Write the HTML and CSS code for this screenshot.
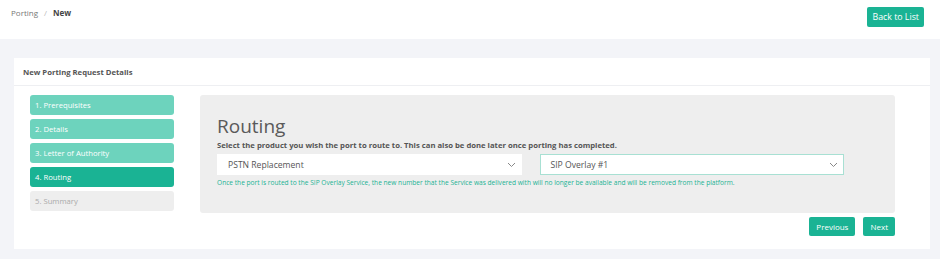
FILE: index.html
```html
<!DOCTYPE html>
<html lang="en">
  <head>
    <meta charset="UTF-8" />
    <title>Porting - New</title>
    <link rel="stylesheet" href="styles.css">
  </head>
  <body>
    <div class="topbar">
      <div class="breadcrumb">
        <span class="crumb">Porting</span>
        <span class="sep">/</span>
        <span class="crumb current">New</span>
      </div>
      <button class="btn">Back to List</button>
    </div>

    <div class="page">
      <div class="card">
        <div class="card-header">New Porting Request Details</div>
        <div class="card-body">
          <div class="wizard">
            <ul class="steps">
              <li class="step done">1. Prerequisites</li>
              <li class="step done">2. Details</li>
              <li class="step done">3. Letter of Authority</li>
              <li class="step active">4. Routing</li>
              <li class="step disabled">5. Summary</li>
            </ul>
            <div class="panel">
              <h2>Routing</h2>
              <p class="lead">Select the product you wish the port to route to. This can also be done later once porting has completed.</p>
              <div class="selects">
                <div class="select">
                  <span>PSTN Replacement</span>
                  <svg width="9" height="6" viewBox="0 0 9 6"><path d="M1 1l3.5 3.5L8 1" fill="none" stroke="#888" stroke-width="1"/></svg>
                </div>
                <div class="select focused">
                  <span>SIP Overlay #1</span>
                  <svg width="9" height="6" viewBox="0 0 9 6"><path d="M1 1l3.5 3.5L8 1" fill="none" stroke="#888" stroke-width="1"/></svg>
                </div>
              </div>
              <p class="help">Once the port is routed to the SIP Overlay Service, the new number that the Service was delivered with will no longer be available and will be removed from the platform.</p>
            </div>
          </div>
          <div class="actions">
            <button class="btn">Previous</button>
            <button class="btn">Next</button>
          </div>
        </div>
      </div>
    </div>
  </body>
</html>
```

FILE: styles.css
```css
body {
  margin: 0;
  font-family: "Open Sans", "Liberation Sans", sans-serif;
  background-color: #f3f4f8;
  color: #676a6c;
}

.topbar {
  display: flex;
  justify-content: space-between;
  align-items: flex-start;
  background: white;
  height: 39px;
  padding: 7px 16px 0 11px;
  box-sizing: border-box;
}

.breadcrumb {
  font-size: 8px;
  padding-top: 0;
}

.crumb {
  color: #777;
}

.crumb.current {
  color: #444;
  font-weight: bold;
}

.sep {
  color: #bbb;
  margin: 0 4px;
}

.btn {
  background-color: #1ab394;
  color: white;
  border: none;
  border-radius: 2px;
  font-family: inherit;
  font-size: 8px;
  height: 19px;
  padding: 0 6px;
  cursor: pointer;
}

.topbar .btn {
  height: 20px;
  padding: 0 5px;
  font-size: 8.8px;
}

.page {
  padding: 19px 10px 10px 14px;
}

.card {
  background: white;
  width: 916px;
  height: 191px;
}

.card-header {
  font-size: 7.7px;
  font-weight: bold;
  color: #555;
  height: 27px;
  line-height: 28px;
  padding-left: 9px;
  border-bottom: 1px solid #eeeff2;
}

.card-body {
  padding: 9px 35px 0 16px;
}

.wizard {
  display: flex;
  gap: 26px;
}

.steps {
  list-style: none;
  margin: 0;
  padding: 0;
  width: 144px;
  display: flex;
  flex-direction: column;
  gap: 4px;
}

.step {
  height: 20px;
  line-height: 20px;
  border-radius: 3px;
  padding-left: 5px;
  font-size: 7.7px;
  color: white;
}

.step.done {
  background-color: #6dd3bd;
}

.step.active {
  background-color: #1ab394;
}

.step.disabled {
  background-color: #eeeeee;
  color: #aaa;
}

.panel {
  flex: 1;
  height: 118px;
  background-color: #eeeeee;
  border-radius: 3px;
  padding: 19px 17px 0 17px;
  box-sizing: border-box;
}

.panel h2 {
  margin: 0;
  font-size: 19px;
  font-weight: normal;
  color: #5a5a5a;
  line-height: 24px;
}

.lead {
  margin: 2px 0 4px;
  font-size: 7.7px;
  font-weight: bold;
  color: #555;
}

.selects {
  display: flex;
  gap: 18px;
  width: 627px;
}

.select {
  flex: 1;
  display: flex;
  justify-content: space-between;
  align-items: center;
  height: 19px;
  background: white;
  padding: 0 5px 0 10px;
  font-size: 8.6px;
  color: #555;
  border: 1px solid white;
}

.select.focused {
  border-color: #a8e0d3;
}

.help {
  margin: 3px 0 0;
  font-size: 6.6px;
  color: #1ab394;
}

.actions {
  display: flex;
  justify-content: flex-end;
  gap: 8px;
  margin-top: 4px;
}

.actions .btn {
  height: 19px;
  padding: 0 7px;
}
```
